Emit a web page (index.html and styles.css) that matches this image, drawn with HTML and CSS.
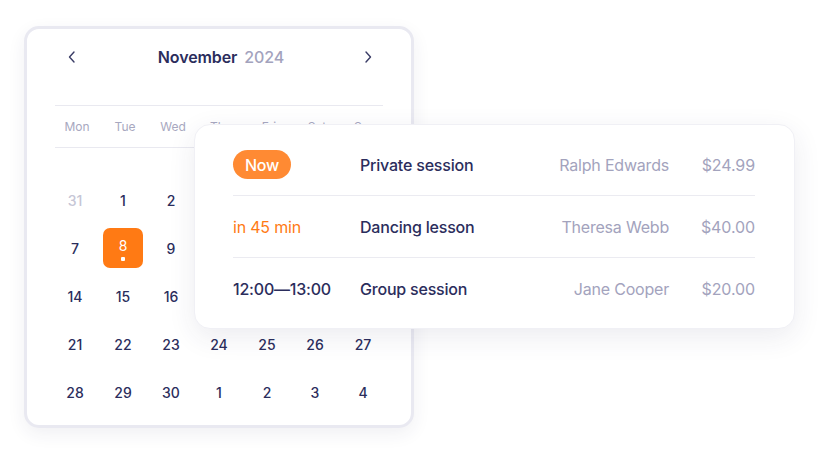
FILE: index.html
```html
<!DOCTYPE html>
<html>
<head>
<meta charset="utf-8">
<link rel="stylesheet" href="styles.css">
</head>
<body>
<div class="stage">
  <div class="calendar">
    <div class="cal-head">
      <span class="chev"><svg width="10" height="12" viewBox="0 0 10 12"><path d="M7 1 L2.5 6 L7 11" fill="none" stroke="#3a3d66" stroke-width="1.4" stroke-linecap="round" stroke-linejoin="round"/></svg></span>
      <span class="title"><b>November</b> <span class="year">2024</span></span>
      <span class="chev"><svg width="10" height="12" viewBox="0 0 10 12"><path d="M3 1 L7.5 6 L3 11" fill="none" stroke="#3a3d66" stroke-width="1.4" stroke-linecap="round" stroke-linejoin="round"/></svg></span>
    </div>
    <div class="weekdays">
      <span>Mon</span><span>Tue</span><span>Wed</span><span>Thu</span><span>Fri</span><span>Sat</span><span>Sun</span>
    </div>
    <div class="days">
      <span class="muted">31</span><span>1</span><span>2</span><span>3</span><span>4</span><span>5</span><span>6</span>
      <span>7</span><span class="sel"><i>8</i><em></em></span><span>9</span><span>10</span><span>11</span><span>12</span><span>13</span>
      <span>14</span><span>15</span><span>16</span><span>17</span><span>18</span><span>19</span><span>20</span>
      <span>21</span><span>22</span><span>23</span><span>24</span><span>25</span><span>26</span><span>27</span>
      <span>28</span><span>29</span><span>30</span><span>1</span><span>2</span><span>3</span><span>4</span>
    </div>
  </div>
  <div class="sessions">
    <div class="row">
      <span class="time"><span class="pill">Now</span></span>
      <span class="name">Private session</span>
      <span class="who">Ralph Edwards</span>
      <span class="price">$24.99</span>
    </div>
    <div class="row">
      <span class="time soon">in 45 min</span>
      <span class="name">Dancing lesson</span>
      <span class="who">Theresa Webb</span>
      <span class="price">$40.00</span>
    </div>
    <div class="row">
      <span class="time">12:00—13:00</span>
      <span class="name">Group session</span>
      <span class="who">Jane Cooper</span>
      <span class="price">$20.00</span>
    </div>
  </div>
</div>
</body>
</html>
```

FILE: styles.css
```css
* { box-sizing: border-box; margin: 0; padding: 0; }
html, body { background: #fff; }
body {
  font-family: Inter, "Noto Sans", sans-serif;
  color: #2b2d5c;
  width: 820px;
  height: 452px;
  overflow: hidden;
}
.stage {
  position: relative;
  padding: 26px 0 0 24px;
}
.calendar {
  width: 390px;
  height: 402px;
  border: 3px solid #e9e9f1;
  border-radius: 15px;
  background: #fff;
  box-shadow: 0 6px 18px rgba(40, 40, 90, 0.07);
  padding: 12px 24px 0 24px;
}
.cal-head {
  height: 32px;
  display: flex;
  align-items: center;
  justify-content: space-between;
  padding: 0 12px 0 16px;
}
.chev { display: flex; align-items: center; width: 12px; height: 14px; }
.title { font-size: 16px; font-weight: 600; color: #2b2d5c; letter-spacing: -0.1px; }
.title b { font-weight: 600; }
.title .year { color: #a3a3bd; font-weight: 500; margin-left: 3px; }
.weekdays {
  margin: 32px 4px 0 4px;
  height: 43px;
  border-top: 1px solid #e9e9f0;
  border-bottom: 1px solid #e9e9f0;
  display: grid;
  grid-template-columns: repeat(7, 48px);
  align-items: center;
}
.weekdays span {
  font-size: 12px;
  color: #a8a8c0;
  text-align: center;
  margin-left: -4px;
}
.days {
  margin-top: 28px;
  display: grid;
  grid-template-columns: repeat(7, 48px);
  grid-auto-rows: 48px;
}
.days span {
  display: flex;
  align-items: center;
  justify-content: center;
  font-size: 14px;
  font-weight: 500;
  color: #2b2d5c;
}
.days .muted { color: #c6c6d6; }
.days .sel {
  position: relative;
  width: 40px;
  height: 40px;
  margin: 4px;
  border-radius: 7px;
  background: #ff7a14;
  color: #fff;
  flex-direction: column;
}
.days .sel i { font-style: normal; font-weight: 400; line-height: 16px; margin-top: 2px; }
.days .sel em {
  width: 4px; height: 4px; border-radius: 1px; background: #fff; margin-top: 3px;
}
.sessions {
  position: absolute;
  left: 194px;
  top: 124px;
  width: 601px;
  height: 205px;
  background: #fff;
  border-radius: 16px;
  border: 1px solid #f0f0f5;
  box-shadow: 0 8px 28px rgba(40, 40, 90, 0.09);
  padding: 9px 39px 0 38px;
}
.row {
  height: 62px;
  display: grid;
  grid-template-columns: 127px 1fr auto 86px;
  align-items: center;
  font-size: 16px;
  border-bottom: 1px solid #ebebf1;
}
.row:last-child { border-bottom: none; }
.time { color: #2b2d5c; font-weight: 500; letter-spacing: -0.2px; }
.time.soon { color: #ff7a14; font-weight: 400; }
.pill {
  display: inline-flex;
  align-items: center;
  justify-content: center;
  width: 58px;
  height: 29px;
  border-radius: 15px;
  background: #ff8a33;
  color: #fff;
  font-weight: 500;
}
.name { color: #2b2d5c; font-weight: 500; letter-spacing: -0.2px; }
.who { color: #a3a3bd; text-align: right; letter-spacing: -0.2px; }
.price { color: #a3a3bd; text-align: right; letter-spacing: -0.1px; }
```
